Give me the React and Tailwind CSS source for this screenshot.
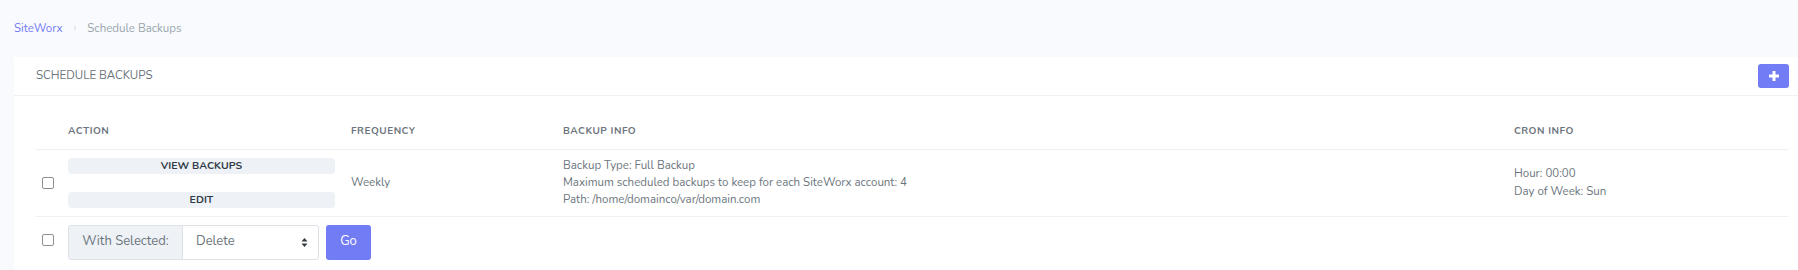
import React from 'react';

const font = { fontFamily: 'Nunito, Lato, "Noto Sans", sans-serif' };

const Checkbox = () => (
  <span className="inline-block w-[12px] h-[12px] rounded-[2px] border border-[#8a8f94] bg-white align-middle" />
);

const App = () => {
  return (
    <div className="w-[1798px] h-[270px] overflow-hidden bg-[#f9fafd] text-[#6c757d]" style={font}>
      <div className="h-[57px] pl-[14px] pt-[20px]">
        <nav className="flex items-center text-[11.5px] leading-[16px]">
          <span className="text-[#727cf5]">SiteWorx</span>
          <span className="mx-[11px] text-[#ced4da] text-[11px]">›</span>
          <span className="text-[#98a6ad]">Schedule Backups</span>
        </nav>
      </div>

      <div className="ml-[14px] bg-white pb-[20px]">
        <div className="h-[39px] flex items-center justify-between pl-[22px] pr-[9px] border-b border-[#eef2f7]">
          <h4 className="text-[11.5px] text-[#6c757d] uppercase">Schedule Backups</h4>
          <button className="w-[31px] h-[24px] rounded-[3px] bg-[#727cf5] flex items-center justify-center">
            <svg width="12" height="12" viewBox="0 0 12 12">
              <path d="M6 1v10M1 6h10" stroke="white" strokeWidth="3" />
            </svg>
          </button>
        </div>

        <div className="pl-[21px] pr-[9px] pt-[19px]">
          <table className="w-full border-collapse text-[11.5px] table-fixed">
            <colgroup>
              <col className="w-[25px]" />
              <col className="w-[283px]" />
              <col className="w-[212px]" />
              <col className="w-[951px]" />
              <col />
            </colgroup>
            <thead>
              <tr className="h-[34px] border-b border-[#eef2f7]">
                <th />
                <th className="text-left px-[8px] text-[10px] font-bold tracking-[0.05em] text-[#6c757d]">ACTION</th>
                <th className="text-left px-[8px] text-[10px] font-bold tracking-[0.05em] text-[#6c757d]">FREQUENCY</th>
                <th className="text-left px-[8px] text-[10px] font-bold tracking-[0.05em] text-[#6c757d]">BACKUP INFO</th>
                <th className="text-left px-[8px] text-[10px] font-bold tracking-[0.05em] text-[#6c757d]">CRON INFO</th>
              </tr>
            </thead>
            <tbody>
              <tr className="h-[67px] border-b border-[#eef2f7]">
                <td className="pl-[7px]"><Checkbox /></td>
                <td className="px-[8px]">
                  <div className="flex flex-col gap-[18px]">
                    <button className="h-[16px] w-full rounded-[4px] bg-[#eef2f7] text-[#313a46] text-[10.5px] font-bold leading-[16px]">VIEW BACKUPS</button>
                    <button className="h-[16px] w-full rounded-[4px] bg-[#eef2f7] text-[#313a46] text-[10.5px] font-bold leading-[16px]">EDIT</button>
                  </div>
                </td>
                <td className="px-[8px]">Weekly</td>
                <td className="px-[8px] leading-[17.3px]">
                  <div>Backup Type: Full Backup</div>
                  <div>Maximum scheduled backups to keep for each SiteWorx account: 4</div>
                  <div>Path: /home/domainco/var/domain.com</div>
                </td>
                <td className="px-[8px] leading-[17.3px]">
                  <div>Hour: 00:00</div>
                  <div>Day of Week: Sun</div>
                </td>
              </tr>
              <tr>
                <td className="pl-[7px] pt-[8px] align-top">
                  <div className="h-[35px] flex items-center pb-[4px]"><Checkbox /></div>
                </td>
                <td colSpan={4} className="px-[8px] pt-[8px]">
                  <div className="flex items-center gap-[7px]">
                    <div className="flex h-[35px] w-[251px] text-[13px]">
                      <span className="w-[115px] flex items-center justify-center bg-[#eef2f7] border border-[#dee2e6] rounded-l-[3px] text-[#6c757d]">With Selected:</span>
                      <div className="flex-1 flex items-center justify-between pl-[13px] pr-[10px] border border-l-0 border-[#dee2e6] rounded-r-[3px] text-[#6c757d]">
                        <span>Delete</span>
                        <svg width="7" height="11" viewBox="0 0 7 11">
                          <path d="M0.5 4.5L3.5 1L6.5 4.5Z M0.5 6.5L3.5 10L6.5 6.5Z" fill="#343a40" />
                        </svg>
                      </div>
                    </div>
                    <button className="h-[35px] w-[45px] rounded-[3px] bg-[#727cf5] text-white text-[13px]">Go</button>
                  </div>
                </td>
              </tr>
            </tbody>
          </table>
        </div>
      </div>
    </div>
  );
};

export default App;
